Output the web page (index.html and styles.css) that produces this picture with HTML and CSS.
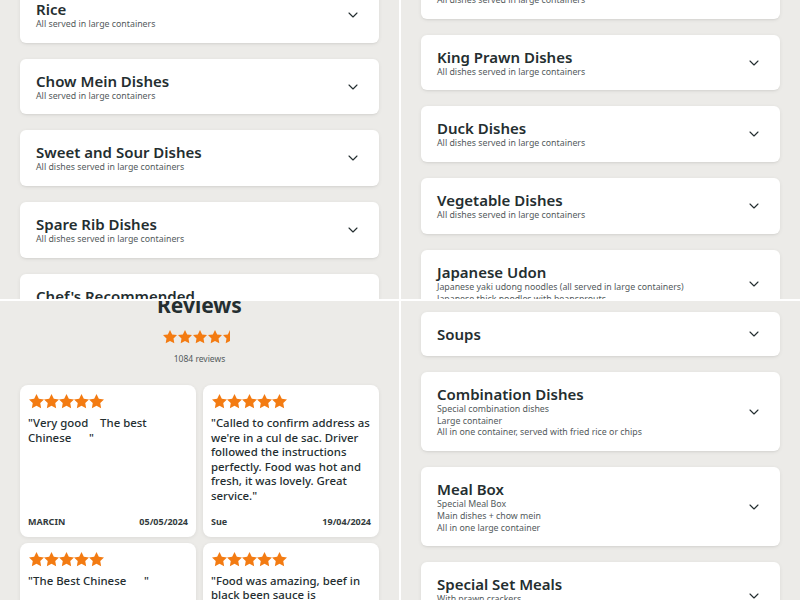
FILE: index.html
```html
<!DOCTYPE html>
<html lang="en">
<head>
<meta charset="utf-8">
<title>Menu</title>
<link rel="stylesheet" href="styles.css">
</head>
<body>
<svg width="0" height="0" class="defs" aria-hidden="true">
  <defs>
    <symbol id="star" viewBox="2 2 20 20"><path d="M12 2l3.09 6.26L22 9.27l-5 4.87 1.18 6.88L12 17.770l-6.18 3.25L7 14.14 2 9.27l6.91-1.01L12 2z"/></symbol>
    <symbol id="half" viewBox="2 2 20 20"><path d="M12 2v15.77l-6.18 3.25L7 14.14 2 9.27l6.91-1.01L12 2z"/></symbol>
    <symbol id="chev" viewBox="0 0 10 6"><path d="M1 1l4 4 4-4" fill="none" stroke="#242e30" stroke-width="1.1" stroke-linecap="round" stroke-linejoin="round"/></symbol>
  </defs>
</svg>
<div class="shots">
  <!-- top-left -->
  <section class="panel">
    <div class="list list-a">
      <div class="cat"><div class="cat-text"><h3>Rice</h3><p>All served in large containers</p></div><svg class="chev"><use href="#chev"/></svg></div>
      <div class="cat"><div class="cat-text"><h3>Chow Mein Dishes</h3><p>All served in large containers</p></div><svg class="chev"><use href="#chev"/></svg></div>
      <div class="cat"><div class="cat-text"><h3>Sweet and Sour Dishes</h3><p>All dishes served in large containers</p></div><svg class="chev"><use href="#chev"/></svg></div>
      <div class="cat"><div class="cat-text"><h3>Spare Rib Dishes</h3><p>All dishes served in large containers</p></div><svg class="chev"><use href="#chev"/></svg></div>
      <div class="cat"><div class="cat-text"><h3>Chef's Recommended</h3><p>All dishes served in large containers</p><p>Chef's special selection</p><p>Served with fried rice</p></div><svg class="chev"><use href="#chev"/></svg></div>
    </div>
  </section>
  <!-- top-right -->
  <section class="panel">
    <div class="list list-b">
      <div class="cat"><div class="cat-text"><h3>Chicken Dishes</h3><p>All dishes served in large containers</p></div><svg class="chev"><use href="#chev"/></svg></div>
      <div class="cat"><div class="cat-text"><h3>King Prawn Dishes</h3><p>All dishes served in large containers</p></div><svg class="chev"><use href="#chev"/></svg></div>
      <div class="cat"><div class="cat-text"><h3>Duck Dishes</h3><p>All dishes served in large containers</p></div><svg class="chev"><use href="#chev"/></svg></div>
      <div class="cat"><div class="cat-text"><h3>Vegetable Dishes</h3><p>All dishes served in large containers</p></div><svg class="chev"><use href="#chev"/></svg></div>
      <div class="cat"><div class="cat-text"><h3>Japanese Udon</h3><p>Japanese yaki udong noodles (all served in large containers)</p><p>Japanese thick noodles with beansprouts</p></div><svg class="chev"><use href="#chev"/></svg></div>
    </div>
  </section>
  <!-- bottom-left -->
  <section class="panel">
    <div class="reviews">
      <h2>Reviews</h2>
      <div class="rating">
        <svg class="rstar"><use href="#star"/></svg><svg class="rstar"><use href="#star"/></svg><svg class="rstar"><use href="#star"/></svg><svg class="rstar"><use href="#star"/></svg><svg class="rstar"><use href="#half"/></svg>
      </div>
      <p class="count">1084 reviews</p>
      <div class="rgrid">
        <article class="rcard">
          <div class="stars"><svg><use href="#star"/></svg><svg><use href="#star"/></svg><svg><use href="#star"/></svg><svg><use href="#star"/></svg><svg><use href="#star"/></svg></div>
          <p class="rtext">"Very good &nbsp;&nbsp; The best Chinese &nbsp; &nbsp; &nbsp;"</p>
          <div class="rfoot"><span>MARCIN</span><span>05/05/2024</span></div>
        </article>
        <article class="rcard">
          <div class="stars"><svg><use href="#star"/></svg><svg><use href="#star"/></svg><svg><use href="#star"/></svg><svg><use href="#star"/></svg><svg><use href="#star"/></svg></div>
          <p class="rtext">"Called to confirm address as we're in a cul de sac. Driver followed the instructions perfectly. Food was hot and fresh, it was lovely. Great service."</p>
          <div class="rfoot"><span>Sue</span><span>19/04/2024</span></div>
        </article>
        <article class="rcard">
          <div class="stars"><svg><use href="#star"/></svg><svg><use href="#star"/></svg><svg><use href="#star"/></svg><svg><use href="#star"/></svg><svg><use href="#star"/></svg></div>
          <p class="rtext">"The Best Chinese &nbsp; &nbsp; &nbsp;"</p>
          <div class="rfoot"><span>Anna</span><span>12/04/2024</span></div>
        </article>
        <article class="rcard">
          <div class="stars"><svg><use href="#star"/></svg><svg><use href="#star"/></svg><svg><use href="#star"/></svg><svg><use href="#star"/></svg><svg><use href="#star"/></svg></div>
          <p class="rtext">"Food was amazing, beef in black been sauce is outstanding, will order again."</p>
          <div class="rfoot"><span>John</span><span>10/04/2024</span></div>
        </article>
      </div>
    </div>
  </section>
  <!-- bottom-right -->
  <section class="panel">
    <div class="list list-d">
      <div class="cat"><div class="cat-text"><h3>Soups</h3></div><svg class="chev"><use href="#chev"/></svg></div>
      <div class="cat"><div class="cat-text"><h3>Combination Dishes</h3><p>Special combination dishes</p><p>Large container</p><p>All in one container, served with fried rice or chips</p></div><svg class="chev"><use href="#chev"/></svg></div>
      <div class="cat"><div class="cat-text"><h3>Meal Box</h3><p>Special Meal Box</p><p>Main dishes + chow mein</p><p>All in one large container</p></div><svg class="chev"><use href="#chev"/></svg></div>
      <div class="cat"><div class="cat-text"><h3>Special Set Meals</h3><p>With prawn crackers</p><p>Served for two people</p></div><svg class="chev"><use href="#chev"/></svg></div>
    </div>
  </section>
</div>
</body>
</html>
```

FILE: styles.css
```css
* { box-sizing: border-box; }
html, body { margin: 0; padding: 0; }
body {
  background: #ffffff;
  font-family: "Noto Sans", "Open Sans", sans-serif;
  color: #242e30;
  width: 800px;
  height: 600px;
  overflow: hidden;
}
.defs { position: absolute; width: 0; height: 0; }

.shots {
  display: grid;
  grid-template-columns: 399px 399px;
  grid-template-rows: 299px 299px;
  column-gap: 2px;
  row-gap: 2px;
  width: 800px;
  height: 600px;
}
.panel {
  background: #ecebe8;
  overflow: hidden;
  padding: 0 20px;
}

.list { display: flex; flex-direction: column; gap: 16px; }
.list-a { margin-top: -13px; }
.list-b { margin-top: -37px; }
.list-d { margin-top: 11px; }

.cat {
  background: #ffffff;
  border-radius: 6px;
  box-shadow: 0 1px 4px rgba(0,0,0,0.07), 0 2px 2px -1px rgba(0,0,0,0.05);
  padding: 12px 21px 12px 16px;
  display: flex;
  align-items: center;
  gap: 12px;
}
.cat-text { flex: 1; min-width: 0; }
.cat h3 {
  margin: 0;
  font-size: 15px;
  line-height: 20px;
  font-weight: 600;
  color: #242e30;
}
.cat p {
  margin: 0;
  font-size: 8.8px;
  line-height: 11.7px;
  color: #535a5c;
}
.chev { width: 10px; height: 6px; flex: none; }

.reviews { margin-top: -10px; display: flex; flex-direction: column; align-items: center; }
.reviews h2 {
  margin: 0;
  font-size: 21px;
  line-height: 28px;
  font-weight: 700;
  color: #242e30;
}
.rating { display: flex; gap: 1px; margin-top: 11px; height: 15px; }
.rstar { width: 14px; height: 14px; fill: #f37b12; }
.count {
  margin: 8px 0 0;
  font-size: 8.5px;
  line-height: 12px;
  color: #535a5c;
}
.rgrid {
  margin-top: 20px;
  width: 100%;
  display: grid;
  grid-template-columns: 1fr 1fr;
  column-gap: 7px;
  row-gap: 6px;
}
.rcard {
  background: #ffffff;
  border-radius: 8px;
  box-shadow: 0 1px 4px rgba(0,0,0,0.07);
  padding: 9px 5px 9px 8px;
  display: flex;
  flex-direction: column;
}
.stars { display: flex; height: 15px; padding-left: 1px; }
.stars svg { width: 15px; height: 15px; fill: #f37b12; }
.rtext {
  margin: 7px 0 0;
  font-size: 11.4px;
  line-height: 14.6px;
  font-weight: 500;
  color: #242e30;
}
.rfoot {
  margin-top: auto;
  padding-top: 12px;
  padding-right: 3px;
  display: flex;
  justify-content: space-between;
  font-size: 9px;
  line-height: 12px;
  font-weight: 700;
  color: #333b3d;
}
```
